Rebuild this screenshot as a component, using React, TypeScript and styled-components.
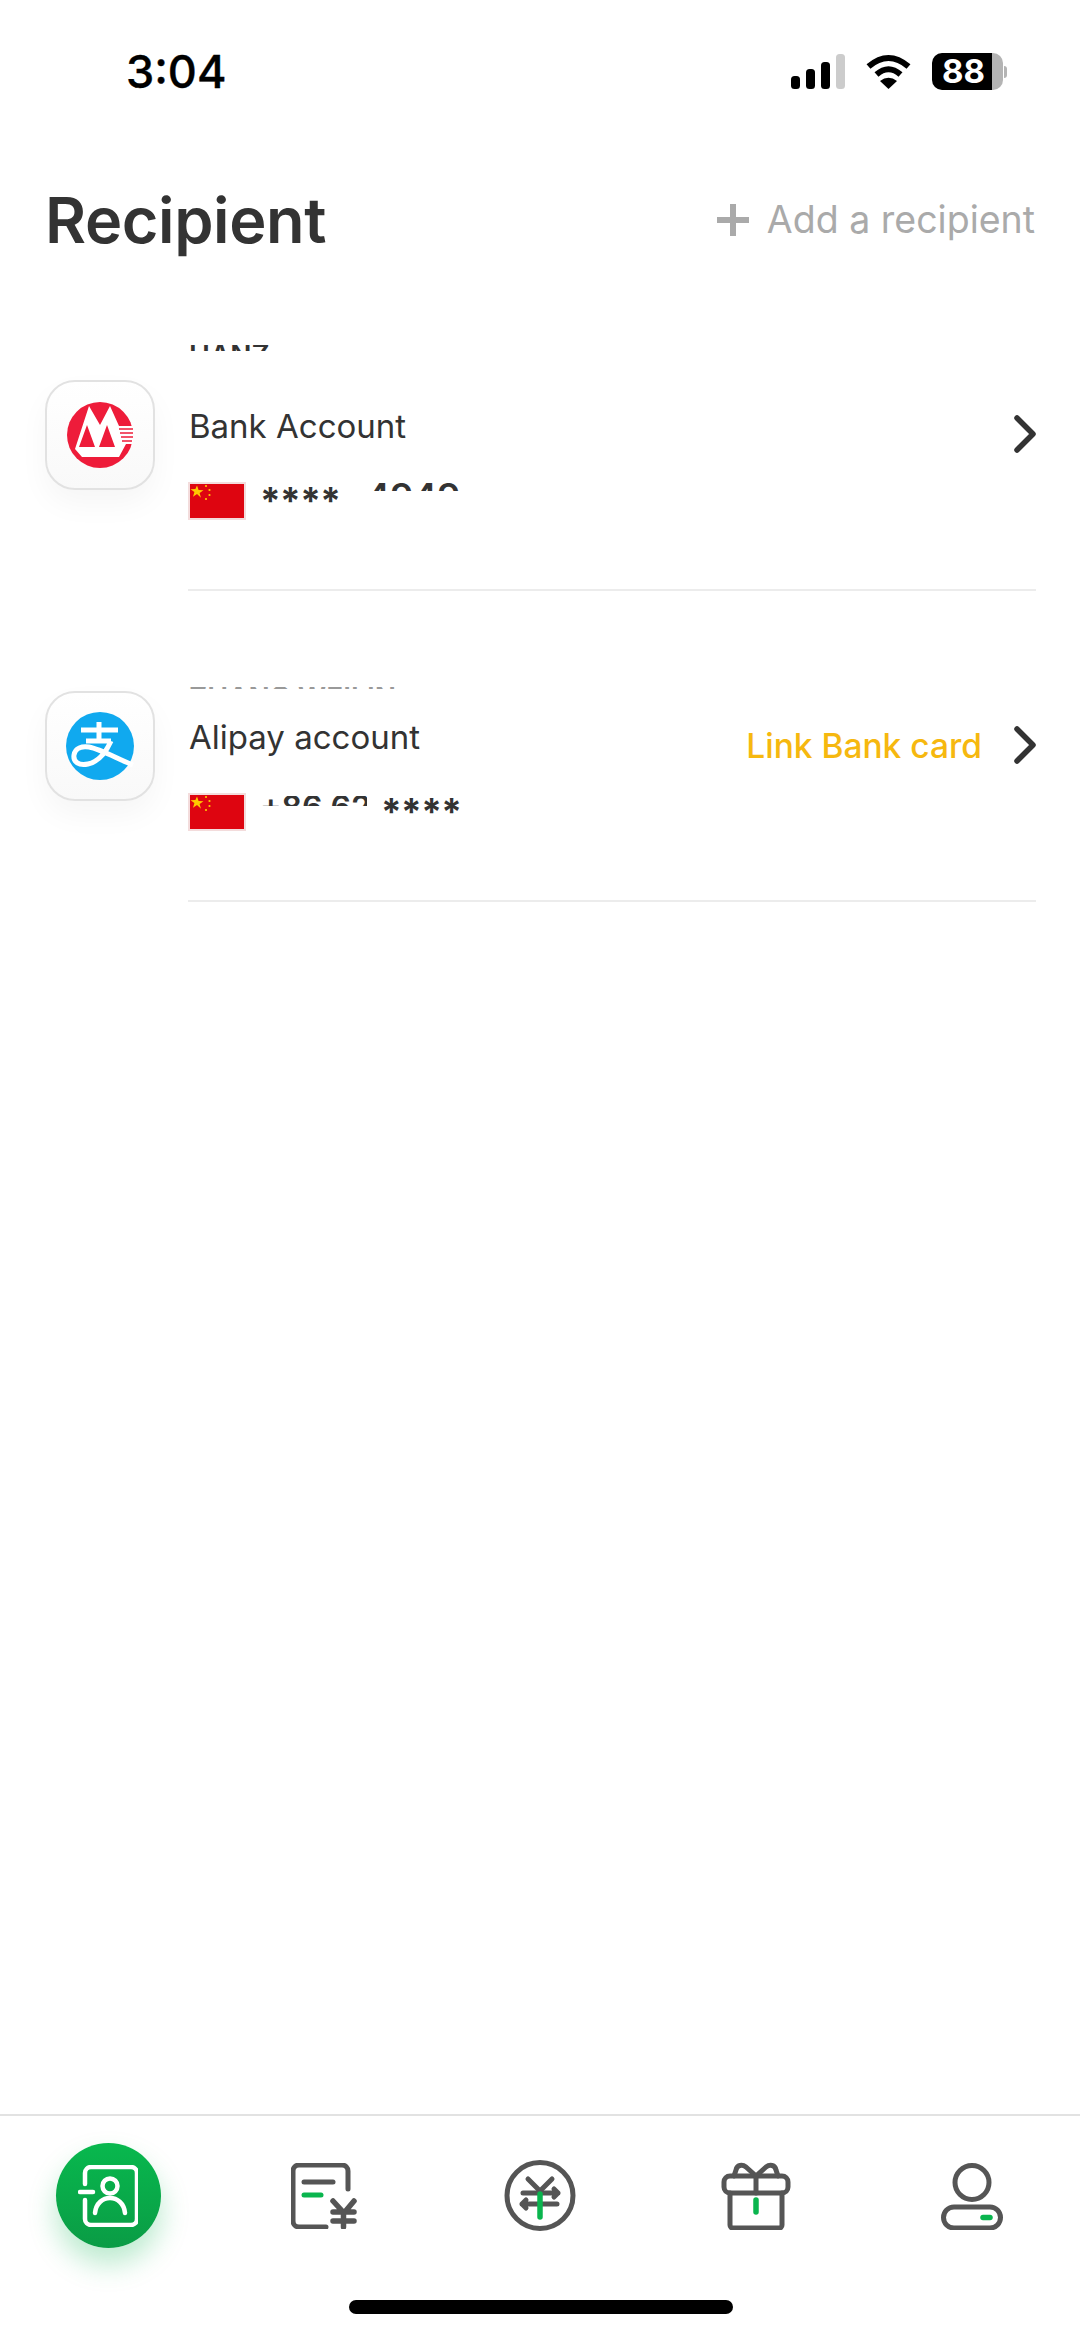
import React from "react";
import styled, { createGlobalStyle } from "styled-components";

const Global = createGlobalStyle`
  html, body { margin: 0; padding: 0; background: #fff; }
  body { font-family: Inter, "Liberation Sans", "Noto Sans CJK SC", sans-serif; }
`;

const Page = styled.div`
  width: 1080px;
  height: 2337px;
  display: flex;
  flex-direction: column;
  background: #fff;
  overflow: hidden;
`;

const StatusBar = styled.div`
  height: 177px;
  flex: none;
  display: flex;
  justify-content: space-between;
  align-items: flex-start;
  padding: 47px 73px 0 126px;
  box-sizing: border-box;
`;

const Clock = styled.div`
  font: 500 45px/50px Inter, "Liberation Sans", sans-serif;
  color: #000;
  -webkit-text-stroke: 0.4px #000;
`;

const StatusIcons = styled.div`
  display: flex;
  align-items: center;
  gap: 20px;
  height: 37px;
  margin-top: 6px;
`;

const BatteryWrap = styled.div`
  display: flex;
  align-items: center;
  gap: 1px;
`;

const Battery = styled.div`
  width: 71px;
  height: 37px;
  border-radius: 10px;
  background: linear-gradient(90deg, #000 0 60px, #b4b4b4 60px);
  color: #fff;
  font: 700 33px/37px Inter, "Liberation Sans", sans-serif;
  padding-left: 10px;
  box-sizing: border-box;
`;

const BatteryTip = styled.div`
  width: 3px;
  height: 12px;
  background: #b4b4b4;
  border-radius: 0 6px 6px 0;
`;

const Header = styled.div`
  flex: none;
  height: 86px;
  display: flex;
  justify-content: space-between;
  align-items: center;
  padding: 0 45px 0 45px;
`;

const Title = styled.h1`
  margin: 0;
  font: 600 63px/76px Inter, "Liberation Sans", sans-serif;
  letter-spacing: -0.4px;
  color: #333;
`;

const AddAction = styled.div`
  display: flex;
  align-items: center;
  gap: 18px;
  font: 400 37.5px/50px Inter, "Liberation Sans", sans-serif;
  color: #aaa;
`;

const List = styled.div`
  display: flex;
  flex-direction: column;
  padding-top: 17px;
`;

const Row = styled.div`
  display: flex;
  height: 311px;
  flex: none;
`;

const LogoTile = styled.div`
  flex: none;
  width: 110px;
  height: 110px;
  margin: 100px 0 0 45px;
  box-sizing: border-box;
  border: 2.5px solid #e2e2e2;
  border-radius: 30px;
  background: linear-gradient(180deg, #fff, #f9f9f9);
  box-shadow: 0 14px 30px rgba(0, 0, 0, 0.04);
  display: flex;
  align-items: center;
  justify-content: center;
`;

const RowBody = styled.div`
  flex: 1;
  margin: 0 44px 0 33px;
  border-bottom: 2px solid #ececec;
  display: flex;
  align-items: flex-start;
  justify-content: space-between;
`;

const Info = styled.div`
  display: flex;
  flex-direction: column;
`;

const NameSlot = styled.div<{ $inset: number }>`
  height: 42px;
  margin-top: 63px;
  padding: ${(p) => p.$inset}px 0 0 1px;
  box-sizing: border-box;
`;

const RowLabel = styled.div`
  font: 400 33px/42px Inter, "Liberation Sans", sans-serif;
  color: #333;
  margin: 20px 0 0 1px;
`;

const MaskedLine = styled.div`
  display: flex;
  align-items: flex-start;
  gap: 14px;
  margin-top: 35px;
`;

const Stars = styled.span`
  font: 700 37px/38px Inter, "Liberation Sans", sans-serif;
  color: #333;
  letter-spacing: -0.6px;
`;

const Clipped = styled.span<{ $w: number; $h: number; $size: number; $top?: number; $pale?: boolean }>`
  display: block;
  width: ${(p) => p.$w}px;
  height: ${(p) => p.$h}px;
  margin-top: ${(p) => p.$top ?? 0}px;
  overflow: hidden;
  font-family: Inter, "Liberation Sans", sans-serif;
  font-weight: 600;
  font-size: ${(p) => p.$size}px;
  line-height: 0.727em;
  color: ${(p) => (p.$pale ? "#999" : "#333")};
  white-space: nowrap;
`;

const Trailing = styled.span`
  margin-left: 12px;
`;

const RowEnd = styled.div`
  display: flex;
  align-items: center;
  gap: 32px;
  margin-top: 133px;
  height: 42px;
`;

const LinkLabel = styled.span`
  font: 500 33.5px/42px Inter, "Liberation Sans", sans-serif;
  color: #f6b80f;
  margin-top: 2px;
`;

const Spacer = styled.div`
  flex: 1;
`;

const TabBar = styled.nav`
  flex: none;
  height: 223px;
  border-top: 2px solid #e2e2e2;
  box-sizing: border-box;
  display: grid;
  grid-template-columns: repeat(5, 216px);
  align-items: start;
  position: relative;
`;

const Tab = styled.div`
  height: 105px;
  margin-top: 27px;
  display: flex;
  justify-content: center;
  align-items: center;
`;

const ActiveTab = styled.div`
  width: 105px;
  height: 105px;
  border-radius: 50%;
  background: linear-gradient(180deg, #08b84e, #0a9c45);
  box-shadow: 0 16px 28px rgba(10, 180, 80, 0.28);
  display: flex;
  align-items: center;
  justify-content: center;
`;

const HomeIndicator = styled.div`
  position: absolute;
  left: 349px;
  top: 184px;
  width: 384px;
  height: 14px;
  border-radius: 7px;
  background: #000;
`;

const Flag = () => (
  <svg width="58" height="38" viewBox="0 0 58 38">
    <rect width="58" height="38" fill="#f3dcdc" />
    <rect x="2" y="2" width="54" height="34" fill="#de0510" />
    <path d="M9 3.5l1.6 4.6 4.9.1-3.9 2.9 1.4 4.7L9 12.1l-4 2.7 1.4-4.7-3.9-2.9 4.9-.1z" fill="#ffc800" />
    <circle cx="18" cy="4" r="1.1" fill="#ffc800" />
    <circle cx="21.5" cy="8" r="1.1" fill="#ffc800" />
    <circle cx="21.5" cy="13" r="1.1" fill="#ffc800" />
    <circle cx="18" cy="17" r="1.1" fill="#ffc800" />
  </svg>
);

const Chevron = () => (
  <svg width="22" height="38" viewBox="0 0 22 38" fill="none">
    <path d="M3 3l16 16L3 35" stroke="#333" strokeWidth="5.5" strokeLinecap="round" strokeLinejoin="round" />
  </svg>
);

const CmbLogo = () => (
  <svg width="66" height="66" viewBox="0 0 66 66">
    <circle cx="33" cy="33" r="33" fill="#ee1c3a" />
    <path d="M8 47L22 4l11 19L43 4l9 20h14v18h-7l-7 13H15z" fill="#fff" />
    <path d="M12 45L20 23l8 22zM32 45l8-22 8 22z" fill="#ee1c3a" />
    <path d="M52 27h14M53 31h13M54 35h12M55 39h10" stroke="#ee1c3a" strokeWidth="1.6" />
  </svg>
);

const AlipayLogo = () => (
  <svg width="68" height="68" viewBox="0 0 68 68" fill="none">
    <circle cx="34" cy="34" r="34" fill="#10a9ef" />
    <path
      d="M15 18h37M33 10v17M20 29h25M45 29C40 40 32 50 22 52 13 54 7 50 8 43c1-7 8-9 15-8 11 2 27 11 44 18"
      stroke="#fff"
      strokeWidth="5"
    />
  </svg>
);

const c = { s: "#555", g: "#0ab54e" };

const ContactsIcon = () => (
  <svg width="60" height="62" viewBox="0 0 60 62" fill="none" stroke="#fff" strokeWidth="4.5" strokeLinecap="round" strokeLinejoin="round">
    <path d="M7 19V8a6 6 0 0 1 6-6h40a6 6 0 0 1 6 6v46a6 6 0 0 1-6 6H13a6 6 0 0 1-6-6V35" />
    <path d="M2 27h13" />
    <circle cx="32" cy="21" r="7.5" />
    <path d="M17 48c1-10 8-15 15-15s14 5 15 15" />
  </svg>
);

const BillIcon = () => (
  <svg width="66" height="66" viewBox="0 0 66 66" fill="none" stroke={c.s} strokeWidth="5" strokeLinecap="round" strokeLinejoin="round">
    <path d="M57 26V8a6 6 0 0 0-6-6H8a6 6 0 0 0-6 6v50a6 6 0 0 0 6 6h27" />
    <path d="M13 19h29" />
    <path d="M13 32h17" stroke={c.g} />
    <path d="M42 38l11 12 10-12M42 49h21M42 58h21M52.500 49v15" strokeWidth="5.500" />
  </svg>
);

const YuanIcon = () => (
  <svg width="72" height="72" viewBox="0 0 72 72" fill="none" stroke={c.s} strokeWidth="5" strokeLinecap="round" strokeLinejoin="round">
    <circle cx="36" cy="35.500" r="33" />
    <path d="M24 19l12 12 12-12" />
    <path d="M19 33h35M50 29l4 4-4 4" />
    <path d="M18 44h35M22 40l-4 4 4 4" />
    <path d="M36 34v23" stroke={c.g} strokeWidth="5.500" />
  </svg>
);

const GiftIcon = () => (
  <svg width="70" height="68" viewBox="0 0 70 68" fill="none" stroke={c.s} strokeWidth="5" strokeLinecap="round" strokeLinejoin="round">
    <rect x="3" y="14" width="64" height="17" rx="6" />
    <path d="M9 31v32a3 3 0 0 0 3 3h46a3 3 0 0 0 3-3V31" />
    <path d="M35 14v17" />
    <path d="M35 14L25 5c-4-3-9-2-10 3l-2 6M35 14l10-9c4-3 9-2 10 3l2 6" />
    <path d="M35 38v12" stroke={c.g} strokeWidth="5.500" />
  </svg>
);

const ProfileIcon = () => (
  <svg width="64" height="68" viewBox="0 0 64 68" fill="none" stroke={c.s} strokeWidth="5" strokeLinecap="round">
    <circle cx="32" cy="20.500" r="17" />
    <rect x="3.500" y="45" width="57" height="21" rx="10.500" />
    <path d="M43 55.500h7" stroke={c.g} strokeWidth="5.500" />
  </svg>
);

export default function App() {
  return (
    <Page>
      <Global />
      <StatusBar>
        <Clock>3:04</Clock>
        <StatusIcons>
          <svg width="54" height="35" viewBox="0 0 54 35">
            <rect x="0" y="22" width="9" height="13" rx="3.500" fill="#000" />
            <rect x="15" y="15" width="9" height="20" rx="3.500" fill="#000" />
            <rect x="30" y="8" width="9" height="27" rx="3.500" fill="#000" />
            <rect x="45" y="0" width="9" height="35" rx="3.500" fill="#ccc" />
          </svg>
          <svg width="47" height="35" viewBox="0 0 47 35" fill="none">
            <path d="M3.500 12.500Q23.500-4.500 43.500 12.500" stroke="#000" strokeWidth="6" />
            <path d="M11.500 20.500Q23.500 10 35.500 20.500" stroke="#000" strokeWidth="6" />
            <path d="M23.500 35L15 27Q23.500 20.500 32 27z" fill="#000" />
          </svg>
          <BatteryWrap>
            <Battery>88</Battery>
            <BatteryTip />
          </BatteryWrap>
        </StatusIcons>
      </StatusBar>
      <Header>
        <Title>Recipient</Title>
        <AddAction>
          <svg width="32" height="32" viewBox="0 0 32 32">
            <path d="M16 0v32M0 16h32" stroke="#aaa" strokeWidth="6" />
          </svg>
          Add a recipient
        </AddAction>
      </Header>
      <List>
        <Row>
          <LogoTile><CmbLogo /></LogoTile>
          <RowBody>
            <Info>
              <NameSlot $inset={2}>
                <Clipped $w={84} $h={6} $size={28}>HANZ</Clipped>
              </NameSlot>
              <RowLabel>Bank Account</RowLabel>
              <MaskedLine>
                <Flag />
                <Stars>****</Stars>
                <Trailing>
                  <Clipped $w={100} $h={8} $size={36} $top={1}>4949</Clipped>
                </Trailing>
              </MaskedLine>
            </Info>
            <RowEnd><Chevron /></RowEnd>
          </RowBody>
        </Row>
        <Row>
          <LogoTile><AlipayLogo /></LogoTile>
          <RowBody>
            <Info>
              <NameSlot $inset={33}>
                <Clipped $w={244} $h={2} $size={28} $pale>ZHANG WEILIN</Clipped>
              </NameSlot>
              <RowLabel>Alipay account</RowLabel>
              <MaskedLine>
                <Flag />
                <Clipped $w={107} $h={10} $size={32} $top={3}>+86 62</Clipped>
                <Stars>****</Stars>
              </MaskedLine>
            </Info>
            <RowEnd>
              <LinkLabel>Link Bank card</LinkLabel>
              <Chevron />
            </RowEnd>
          </RowBody>
        </Row>
      </List>
      <Spacer />
      <TabBar>
        <Tab><ActiveTab><ContactsIcon /></ActiveTab></Tab>
        <Tab><BillIcon /></Tab>
        <Tab><YuanIcon /></Tab>
        <Tab><GiftIcon /></Tab>
        <Tab><ProfileIcon /></Tab>
        <HomeIndicator />
      </TabBar>
    </Page>
  );
}
